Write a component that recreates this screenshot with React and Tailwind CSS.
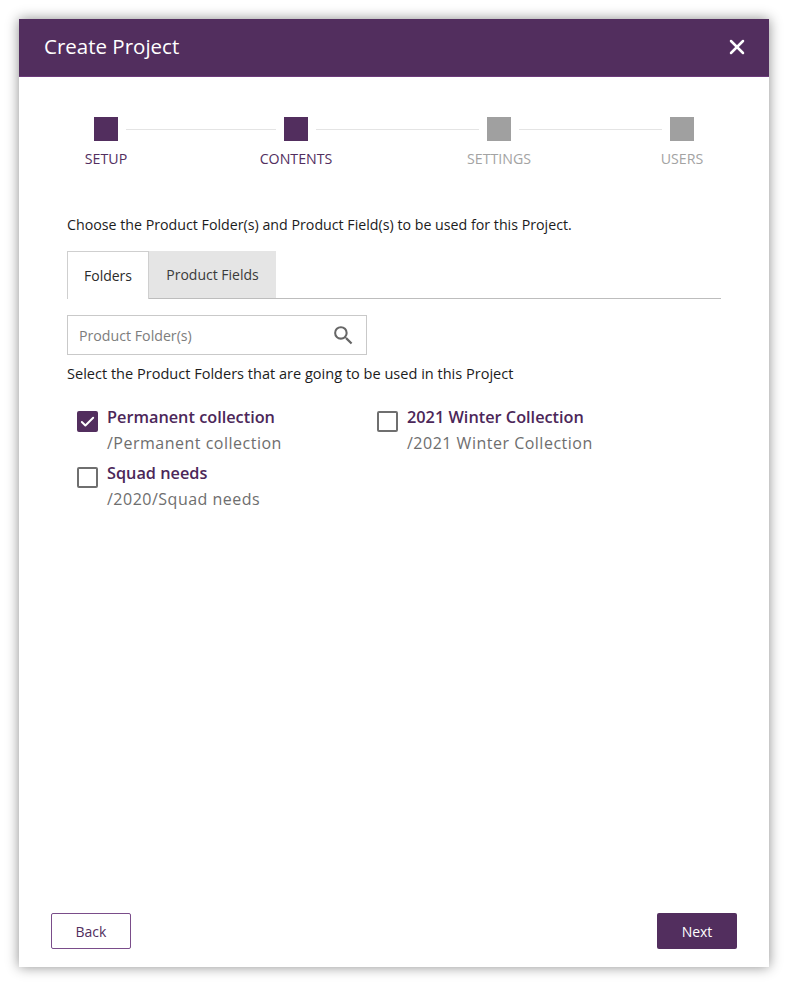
import { Check, X } from "lucide-react";
import { MdSearch } from "react-icons/md";

const font = "font-['Open_Sans',sans-serif]";

const steps = [
  { label: "SETUP", active: true, line: "w-[150px]" },
  { label: "CONTENTS", active: true, line: "w-[163px]" },
  { label: "SETTINGS", active: false, line: "w-[143px]" },
  { label: "USERS", active: false },
];

const folders = [
  { name: "Permanent collection", path: "/Permanent collection", checked: true },
  { name: "2021 Winter Collection", path: "/2021 Winter Collection", checked: false },
  { name: "Squad needs", path: "/2020/Squad needs", checked: false },
];

const Stepper = () => (
  <div className="flex pl-[75px] pt-10">
    {steps.map((step) => (
      <div key={step.label} className="flex">
        <div className="flex w-6 flex-col items-center">
          <div className={`size-6 shrink-0 ${step.active ? "bg-[#522e5e]" : "bg-[#a0a0a0]"}`} />
          <span className={`mt-2 whitespace-nowrap text-[14.2px] leading-5 ${step.active ? "font-medium text-[#522e5e]" : "text-[#a3a3a3]"}`}>
            {step.label}
          </span>
        </div>
        {step.line && <div className={`mx-2 mt-3 h-px bg-[#e4e4e4] ${step.line}`} />}
      </div>
    ))}
  </div>
);

const FolderItem = ({ name, path, checked }) => (
  <div className="flex h-14 items-start">
    <div className={`mt-1.5 flex size-[21px] shrink-0 items-center justify-center rounded-[2px] border-2 ${checked ? "border-[#522e5e] bg-[#522e5e]" : "border-[#6f6f6f] bg-white"}`}>
      {checked && <Check className="size-[18px] text-white" strokeWidth={2.75} />}
    </div>
    <div className="ml-[9px]">
      <div className="text-[16.3px] font-semibold leading-6 text-[#4c2759]">{name}</div>
      <div className="mt-0.5 text-[16px] leading-6 tracking-[0.5px] text-[#6e6e6e]">{path}</div>
    </div>
  </div>
);

const App = () => {
  return (
    <div className={`h-[986px] w-[788px] bg-white p-[19px] ${font}`}>
      <div className="flex h-[948px] w-[750px] flex-col bg-white shadow-[0_0_12px_rgba(0,0,0,0.45)]">
        <div className="flex h-[58px] shrink-0 items-center justify-between border-b border-[#6b3a7a] bg-[#522e5e] pb-0.5 pl-[25px] pr-5">
          <h1 className="text-[20.5px] text-white">Create Project</h1>
          <X className="size-6 text-white" strokeWidth={2.5} />
        </div>

        <Stepper />

        <div className="flex-1 px-12 pt-[46px]">
          <p className="text-[14.23px] leading-5 text-[#1c1c1c]">
            Choose the Product Folder(s) and Product Field(s) to be used for this Project.
          </p>

          <div className="mt-4 flex h-12 w-[654px] border-b border-[#bdbdbd]">
            <div className="flex h-12 w-[82px] items-center justify-center border-x border-t border-[#cfcfcf] bg-white pb-px text-[14px] text-[#2b2b2b]">
              Folders
            </div>
            <div className="flex h-[47px] w-[127px] items-center justify-center bg-[#e5e5e5] text-[14px] text-[#3a3a3a]">
              Product Fields
            </div>
          </div>

          <div className="mt-4 flex h-10 w-[300px] items-center justify-between border border-[#c9c9c9] pl-[11px] pr-2.5">
            <span className="pt-px text-[14.2px] text-[#7d7d7d]">Product Folder(s)</span>
            <MdSearch className="size-[25px] text-[#666666]" />
          </div>

          <p className="mt-2 text-[14.55px] leading-5 text-[#1c1c1c]">
            Select the Product Folders that are going to be used in this Project
          </p>

          <div className="mt-[22px] grid w-[610px] grid-cols-2 pl-2.5">
            {folders.map((folder) => (
              <FolderItem key={folder.name} {...folder} />
            ))}
          </div>
        </div>

        <div className="flex shrink-0 justify-between px-8 pb-[18px]">
          <button className="h-9 w-20 rounded-[2px] border border-[#7a4d8a] bg-white text-[14px] text-[#522e5e]">Back</button>
          <button className="h-9 w-20 rounded-[2px] bg-[#522e5e] text-[14px] text-white">Next</button>
        </div>
      </div>
    </div>
  );
};

export default App;
